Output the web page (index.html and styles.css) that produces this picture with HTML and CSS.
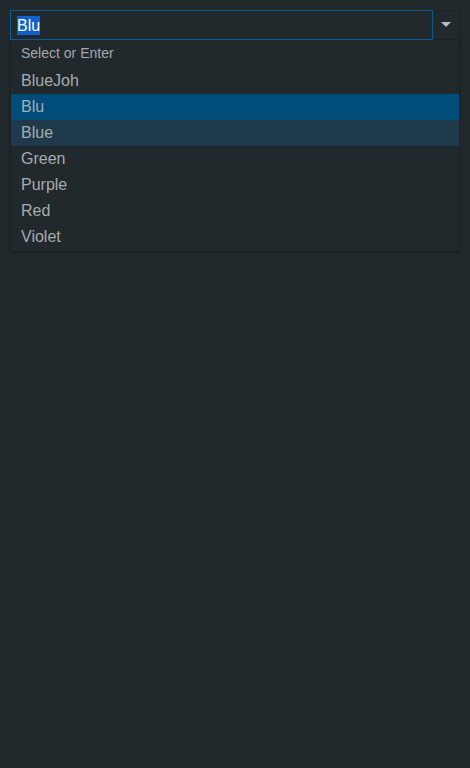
FILE: index.html
```html
<!DOCTYPE html>
<html>
<head>
<meta charset="utf-8">
<link rel="stylesheet" href="styles.css">
</head>
<body>
<div class="combo">
  <div class="field">
    <div class="input"><span class="sel">Blu</span></div>
    <div class="btn"><svg width="10" height="6" viewBox="0 0 10 6"><path d="M0 0H10L5 5Z" fill="#b9bec1"/></svg></div>
  </div>
  <div class="menu">
    <div class="header">Select or Enter</div>
    <div class="item">BlueJoh</div>
    <div class="item active">Blu</div>
    <div class="item hover">Blue</div>
    <div class="item">Green</div>
    <div class="item">Purple</div>
    <div class="item">Red</div>
    <div class="item">Violet</div>
  </div>
</div>
</body>
</html>
```
FILE: styles.css
```css
html, body {
  margin: 0;
  padding: 0;
  background: #22292d;
  height: 100%;
}
body {
  padding: 10px;
  box-sizing: border-box;
  font-family: "Liberation Sans", Arial, sans-serif;
}
.combo {
  width: 450px;
}
.field {
  display: flex;
  height: 30px;
}
.input {
  width: 423px;
  box-sizing: border-box;
  border: 1px solid #0a5a8c;
  background: #22292d;
  padding: 0 0 0 6px;
  display: flex;
  align-items: center;
  font-size: 16px;
  color: #d0d4d6;
}
.sel {
  background: #1060d0;
  color: #ffffff;
  line-height: 19px;
}
.btn {
  flex: 1;
  box-sizing: border-box;
  border-top: 1px solid #1b2124;
  border-right: 1px solid #1b2124;
  border-bottom: 1px solid #1b2124;
  border-top-right-radius: 3px;
  display: flex;
  align-items: center;
  justify-content: center;
  padding-right: 1px;
}
.menu {
  box-sizing: border-box;
  border: 1px solid #1b2124;
  border-top: none;
  border-bottom-left-radius: 3px;
  border-bottom-right-radius: 3px;
  padding: 0 0 1px;
  box-shadow: 0 1px 2px rgba(0,0,0,0.25);
}
.header {
  height: 28px;
  line-height: 26px;
  padding-left: 10px;
  font-size: 14px;
  color: #a2a8ab;
}
.item {
  height: 26px;
  line-height: 26px;
  padding-left: 10px;
  font-size: 16px;
  color: #a6acaf;
}
.item.active {
  background: #004d7a;
}
.item.hover {
  background: #1f3a4a;
}
```
